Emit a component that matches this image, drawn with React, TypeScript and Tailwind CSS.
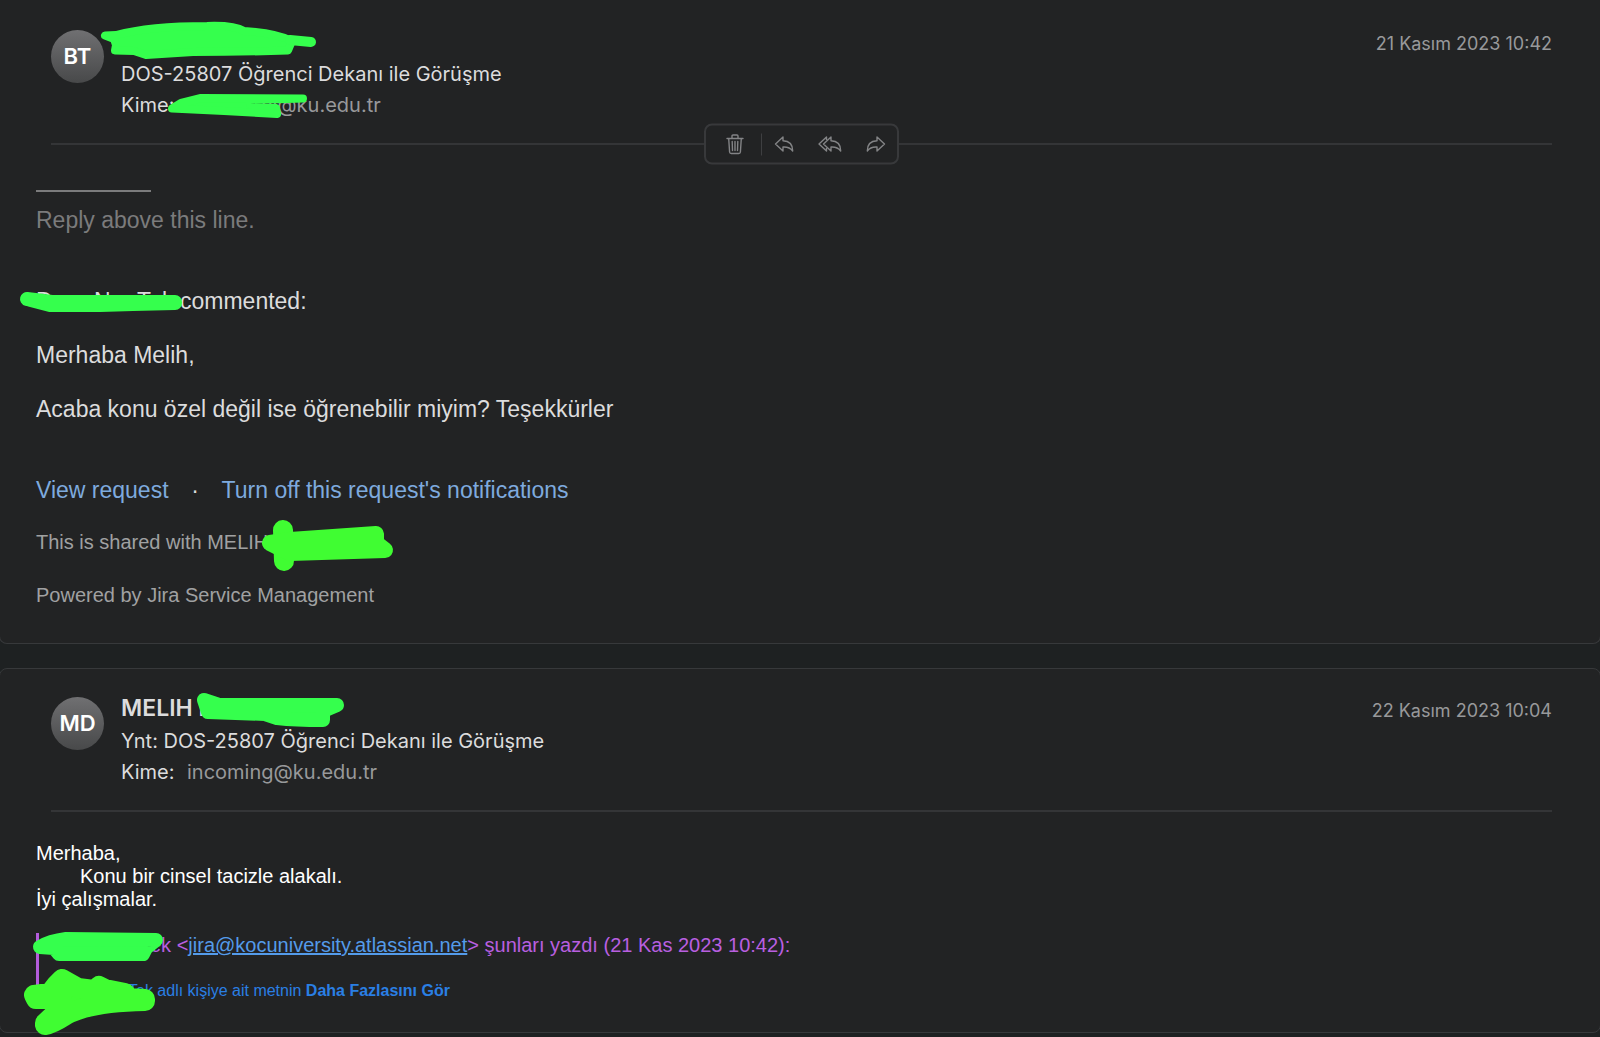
import type { ReactNode } from "react";

type Mark = { color: string; width: number; d: string };

const GREEN = "#35ff4d";
const LIME = "#40fd32";

const firstMarks: Mark[] = [
    { color: GREEN, width: 8, d: "M105 35.500 L116 35 Q150 26 207 26 Q234 25 244 31 Q276 33 292 41 L288 50.500 Q240 52 193 52 L146 55 L134 51 L115 50.500 L116 45 L114 39 Z" },
    { color: GREEN, width: 10, d: "M290 40 L311 42" },
    { color: GREEN, width: 8, d: "M201 98 L303 98.500 L250 100 L250 104 L276 108 L277 114 L224 111 L172 108.500 L181 103 Z" },
    { color: GREEN, width: 14, d: "M27 299 L52 302 L175 302 L175 303 L133 304 L100 305 L50 305 Z" },
    { color: LIME, width: 20, d: "M283 530 L284 561" },
    { color: LIME, width: 16, d: "M270 543 L290 540 L376 534 L376 543 L385 550 L290 553 Z" },
];

const secondMarks: Mark[] = [
    { color: GREEN, width: 14, d: "M204 31 L219 36 L337 36 L323 42 L323 51 Q295 51 277 49 L265 45 L208 43 Z" },
    { color: GREEN, width: 14, d: "M40 278 Q50 272 66 270 L156 271 L146 279 L143 285 L59 285 L54 279 Z" },
    { color: LIME, width: 20, d: "M34 326 L50 324 L57 315 L62 310 L78 319 L94 321 L99 317 L105 320 L125 324 L129 329 L145 330 L145 332 Q90 333 66 346 Q52 355 45 356 L45 354 L62 338 L62 330 L36 330 Z" },
];

function MarkerLayer({ marks }: { marks: Mark[] }) {
    return (
        <svg className="pointer-events-none absolute left-0 top-0 h-full w-full overflow-visible" aria-hidden="true">
            {marks.map((mark, idx) => (
                <path
                    key={idx}
                    d={mark.d}
                    fill={mark.color}
                    stroke={mark.color}
                    strokeWidth={mark.width}
                    strokeLinejoin="round"
                    strokeLinecap="round"
                />
            ))}
        </svg>
    );
}

const ReplyArrow = () => (
    <path d="M9 1.500 1.500 8.500 9 15.500V11.500c4.500-.3 7.500 1 9.700 4 0-6.500-3.700-10-9.700-10.200Z" />
);

const actions: { label: string; width: number; icon: ReactNode }[] = [
    { label: "Yanıtla", width: 20, icon: <ReplyArrow /> },
    {
        label: "Tümünü Yanıtla",
        width: 24,
        icon: (
            <>
                <path d="M8.500 4.500v-3L1 8.500l7.500 7v-3" />
                <g transform="translate(4 0)"><ReplyArrow /></g>
            </>
        ),
    },
    { label: "İlet", width: 20, icon: <g transform="translate(20 0) scale(-1 1)"><ReplyArrow /></g> },
];

function Toolbar() {
    return (
        <div className="absolute left-[653px] top-1/2 flex h-[41px] w-[195px] -translate-y-1/2 items-center rounded-lg border-2 border-[#38393b] bg-[#222324] text-[#838486]">
            <button aria-label="Sil" className="ml-[19px]">
                <svg width="20" height="22" viewBox="0 0 20 22" fill="none" stroke="currentColor" strokeWidth="1.400" strokeLinejoin="round" strokeLinecap="round">
                    <path d="M2 5h16M7 5V2.500q0-1 1-1h4q1 0 1 1V5M3.700 5l.9 13.500q.1 1.500 1.600 1.500h7.600q1.500 0 1.600-1.500L16.300 5" />
                    <path d="M7.200 8l.3 9M10 8v9M12.800 8l-.3 9" />
                </svg>
            </button>
            <span className="ml-4 h-[22px] w-px bg-[#3e3f41]" />
            <div className="ml-3 flex items-center gap-6">
                {actions.map((action) => (
                    <button key={action.label} aria-label={action.label}>
                        <svg width={action.width} height="17" fill="none" stroke="currentColor" strokeWidth="1.400" strokeLinejoin="round">
                            {action.icon}
                        </svg>
                    </button>
                ))}
            </div>
        </div>
    );
}

type HeaderProps = {
    initials: string;
    name?: string;
    subject: string;
    to: ReactNode;
    date: string;
    children?: ReactNode;
};

function MessageHeader({ initials, name, subject, to, date, children }: HeaderProps) {
    return (
        <header className="ml-[51px] mr-12 font-['Inter',sans-serif]">
            <div className="flex items-start">
                <div className="mt-[2px] flex size-[53px] shrink-0 items-center justify-center rounded-full bg-linear-to-b from-[#707072] to-[#48494a] text-[22px] font-semibold text-white">
                    {initials}
                </div>
                <div className="ml-[17px] text-[20px] leading-[31px] text-[#dcdcdd]">
                    <h2 className="h-[31px] text-[23px] font-semibold leading-[26px]">{name}</h2>
                    <p>{subject}</p>
                    <p className="flex">
                        <span className="w-[66px]">Kime:</span>
                        <span className="text-[#98999b]">{to}</span>
                    </p>
                </div>
                <time className="ml-auto text-[18px] leading-[31px] text-[#98999b]">{date}</time>
            </div>
            <div className="relative mt-[22px] h-[2px] bg-[#343537]">{children}</div>
        </header>
    );
}

export default function App() {
    return (
        <main className="overflow-hidden bg-[#1e2122] pb-1 font-['Liberation_Sans',Arial,sans-serif]">
            <article className="relative -mx-px rounded-b-lg border-x border-b border-[#37393b] bg-[#222324] pb-[35px] pt-[28px]">
                <MessageHeader
                    initials="BT"
                    subject="DOS-25807 Öğrenci Dekanı ile Görüşme"
                    to={<span className="ml-[74px]">ci@ku.edu.tr</span>}
                    date="21 Kasım 2023 10:42"
                >
                    <Toolbar />
                </MessageHeader>

                <div className="px-9 text-[23px] leading-[27px] text-[#dcdcdd]">
                    <div className="mt-[45px] h-[2px] w-[115px] bg-[#7b7b7c]" />
                    <p className="mt-[15px] text-[#7b7b7c]">Reply above this line.</p>

                    <p className="mt-[54px] flex">
                        <span className="w-[58px]">D</span>
                        <span className="w-[43px]">N</span>
                        <span className="w-[25px]">T</span>
                        <span className="w-[18px]">k</span>
                        commented:
                    </p>
                    <p className="mt-[27px]">Merhaba Melih,</p>
                    <p className="mt-[27px]">Acaba konu özel değil ise öğrenebilir miyim? Teşekkürler</p>

                    <p className="mt-[54px] flex text-[#7eaade]">
                        <a href="#request">View request</a>
                        <span className="w-[53px] text-center text-[#dcdcdd]">·</span>
                        <a href="#notifications">Turn off this request's notifications</a>
                    </p>

                    <div className="mt-[25px] text-[20px] leading-[26px] text-[#a0a1a2]">
                        <p>This is shared with MELIH</p>
                        <p className="mt-[27px]">Powered by Jira Service Management</p>
                    </div>
                </div>
                <MarkerLayer marks={firstMarks} />
            </article>

            <article className="relative -mx-px mt-6 rounded-lg border border-[#37393b] bg-[#222324] pb-[30px] pt-[26px]">
                <MessageHeader
                    initials="MD"
                    name="MELIH D"
                    subject="Ynt: DOS-25807 Öğrenci Dekanı ile Görüşme"
                    to="incoming@ku.edu.tr"
                    date="22 Kasım 2023 10:04"
                />

                <div className="px-9 text-[20px] leading-[23px] text-white">
                    <div className="mt-[30px]">
                        <p>Merhaba,</p>
                        <p className="pl-11">Konu bir cinsel tacizle alakalı.</p>
                        <p>İyi çalışmalar.</p>
                    </div>

                    <blockquote className="mt-[22px] border-l-[3px] border-[#b45cdc] text-[#b95fe0]">
                        <p className="pl-[111px] pt-px">
                            ek &lt;<a href="mailto:jira@kocuniversity.atlassian.net" className="text-[#549bea] underline">jira@kocuniversity.atlassian.net</a>&gt; şunları yazdı (21 Kas 2023 10:42):
                        </p>
                        <button className="mt-[22px] block pl-[89px] text-left text-[16px] leading-[23px] text-[#2a7fe4]">
                            Tek adlı kişiye ait metnin <b>Daha Fazlasını Gör</b>
                        </button>
                    </blockquote>
                </div>
                <MarkerLayer marks={secondMarks} />
            </article>
        </main>
    );
}
